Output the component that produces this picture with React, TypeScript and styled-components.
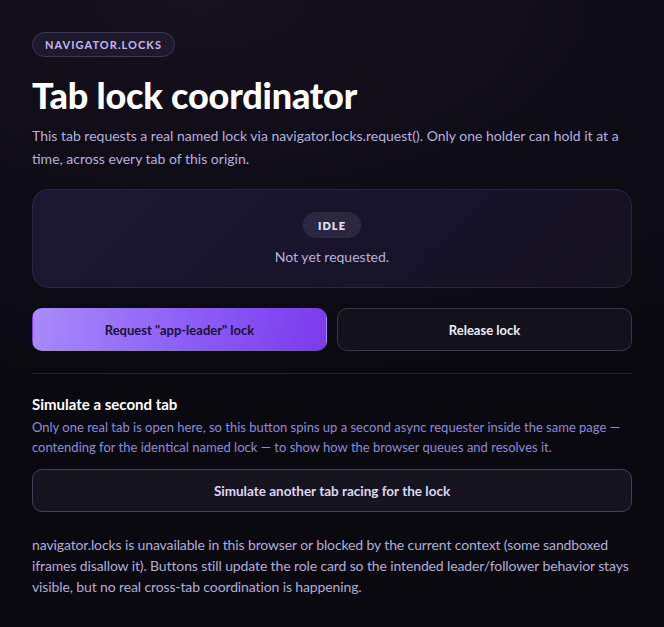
import React from 'react';
import styled, { createGlobalStyle } from 'styled-components';

const GlobalStyle = createGlobalStyle`
  html, body {
    margin: 0;
    padding: 0;
    background: #0a0910;
  }
  body {
    font-family: Lato, "Open Sans", "Liberation Sans", sans-serif;
    color: #ece9fb;
    -webkit-font-smoothing: antialiased;
  }
  * {
    box-sizing: border-box;
  }
`;

const Page = styled.div`
  min-height: 627px;
  background: radial-gradient(ellipse 120% 60% at 30% 0%, #15111f 0%, #0e0c16 55%, #0a0910 100%);
  padding: 32px 32px 40px;
`;

const Main = styled.main`
  max-width: 600px;
  display: flex;
  flex-direction: column;
`;

const Tag = styled.span`
  align-self: flex-start;
  height: 25px;
  padding: 0 12px;
  display: inline-flex;
  align-items: center;
  border-radius: 999px;
  border: 1px solid #3d3654;
  background: #1e1a2c;
  color: #c4b8f6;
  font-size: 11px;
  font-weight: 700;
  letter-spacing: 1.05px;
`;

const Title = styled.h1`
  margin: 17px 0 0;
  font-size: 36px;
  line-height: 42px;
  font-weight: 900;
  color: #ffffff;
  letter-spacing: -0.2px;
`;

const Lead = styled.p`
  margin: 8px 0 0;
  font-size: 14px;
  line-height: 23px;
  color: #b6b0dc;
`;

const StatusCard = styled.section`
  margin-top: 19px;
  height: 99px;
  border-radius: 16px;
  border: 1px solid #2b2444;
  background: linear-gradient(135deg, #1d1832 0%, #17132a 60%, #15121f 100%);
  display: flex;
  flex-direction: column;
  align-items: center;
  justify-content: center;
  gap: 10px;
`;

const Badge = styled.span`
  height: 26px;
  padding: 0 15px;
  display: inline-flex;
  align-items: center;
  border-radius: 999px;
  background: #2b2740;
  color: #e6e2fa;
  font-size: 11px;
  font-weight: 800;
  letter-spacing: 1px;
`;

const StatusText = styled.p`
  margin: 0;
  font-size: 14px;
  color: #b8b2d8;
`;

const ButtonRow = styled.div`
  margin-top: 20px;
  display: grid;
  grid-template-columns: 1fr 1fr;
  gap: 10px;
`;

const Button = styled.button<{ $variant?: 'primary' | 'ghost' }>`
  height: 43px;
  border-radius: 10px;
  font-family: inherit;
  font-size: 13px;
  font-weight: 700;
  cursor: pointer;
  border: 1px solid ${(p) => (p.$variant === 'primary' ? 'transparent' : '#3a3550')};
  background: ${(p) =>
    p.$variant === 'primary'
      ? 'linear-gradient(100deg, #a98bfa 0%, #8b5cf6 55%, #7c3aed 100%)'
      : '#13111b'};
  color: ${(p) => (p.$variant === 'primary' ? '#1b1133' : '#f0eefc')};
`;

const Divider = styled.hr`
  margin: 22px 0 0;
  border: none;
  border-top: 1px solid #24212f;
`;

const SectionTitle = styled.h2`
  margin: 20px 0 0;
  font-size: 15px;
  line-height: 20px;
  font-weight: 700;
  color: #ffffff;
`;

const SectionText = styled.p`
  margin: 3px 0 0;
  font-size: 13px;
  line-height: 20px;
  color: #908ad6;
`;

const WideButton = styled(Button)`
  margin-top: 12px;
  width: 100%;
  font-size: 13.5px;
  background: #16141f;
  border-color: #44405a;
  color: #dcd8f6;
`;

const Note = styled.p`
  margin: 22px 0 0;
  font-size: 14px;
  line-height: 21px;
  letter-spacing: -0.12px;
  color: #b3acd6;
`;

export default function App() {
  return (
    <>
      <GlobalStyle />
      <Page>
        <Main>
          <Tag>NAVIGATOR.LOCKS</Tag>
          <Title>Tab lock coordinator</Title>
          <Lead>
            This tab requests a real named lock via navigator.locks.request(). Only one holder can
            hold it at a time, across every tab of this origin.
          </Lead>
          <StatusCard>
            <Badge>IDLE</Badge>
            <StatusText>Not yet requested.</StatusText>
          </StatusCard>
          <ButtonRow>
            <Button $variant="primary">Request "app-leader" lock</Button>
            <Button $variant="ghost">Release lock</Button>
          </ButtonRow>
          <Divider />
          <SectionTitle>Simulate a second tab</SectionTitle>
          <SectionText>
            Only one real tab is open here, so this button spins up a second async requester inside
            the same page — contending for the identical named lock — to show how the browser
            queues and resolves it.
          </SectionText>
          <WideButton>Simulate another tab racing for the lock</WideButton>
          <Note>
            navigator.locks is unavailable in this browser or blocked by the current context (some
            sandboxed iframes disallow it). Buttons still update the role card so the intended
            leader/follower behavior stays visible, but no real cross-tab coordination is
            happening.
          </Note>
        </Main>
      </Page>
    </>
  );
}
